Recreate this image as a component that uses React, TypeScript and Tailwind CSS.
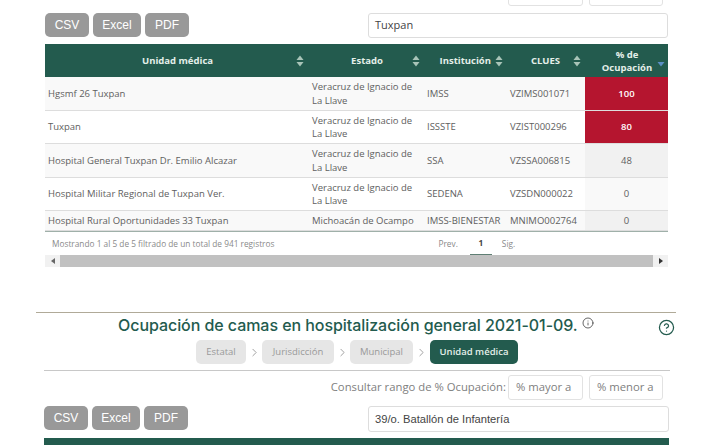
import { ChevronRight, Info, CircleHelp } from "lucide-react";

interface Row {
  unit: string;
  state: string[];
  inst: string;
  clues: string;
  pct: number;
  rowClass: string;
  pctClass: string;
}

const rows: Row[] = [
  { unit: "Hgsmf 26 Tuxpan", state: ["Veracruz de Ignacio de", "La Llave"], inst: "IMSS", clues: "VZIMS001071", pct: 100, rowClass: "h-[33px] bg-[#f9f9f9]", pctClass: "bg-[#b5152f] text-white font-semibold" },
  { unit: "Tuxpan", state: ["Veracruz de Ignacio de", "La Llave"], inst: "ISSSTE", clues: "VZIST000296", pct: 80, rowClass: "h-[33.5px] bg-white", pctClass: "bg-[#b5152f] text-white font-semibold" },
  { unit: "Hospital General Tuxpan Dr. Emilio Alcazar", state: ["Veracruz de Ignacio de", "La Llave"], inst: "SSA", clues: "VZSSA006815", pct: 48, rowClass: "h-[33.5px] bg-[#f9f9f9]", pctClass: "bg-[#f1f1f1]" },
  { unit: "Hospital Militar Regional de Tuxpan Ver.", state: ["Veracruz de Ignacio de", "La Llave"], inst: "SEDENA", clues: "VZSDN000022", pct: 0, rowClass: "h-[33.5px] bg-white", pctClass: "bg-[#f9f9f9]" },
  { unit: "Hospital Rural Oportunidades 33 Tuxpan", state: ["Michoacán de Ocampo"], inst: "IMSS-BIENESTAR", clues: "MNIMO002764", pct: 0, rowClass: "h-[20px] bg-[#f9f9f9]", pctClass: "bg-[#f1f1f1]" },
];

const SortIcon = ({ active }: { active?: boolean }) => (
  <svg width="8" height="12" viewBox="0 0 8 12" className="shrink-0">
    {!active && <path d="M4 0.5 L7.5 5 H0.5 Z" fill="#a9c4b8" />}
    <path d="M0.5 7 H7.5 L4 11.5 Z" fill={active ? "#5b8fc4" : "#a9c4b8"} />
  </svg>
);

const ExportButtons = () => (
  <div className="flex gap-[4px] font-['Liberation_Sans',sans-serif] text-[12px] text-white">
    <div className="flex h-[24px] w-[44px] items-center justify-center rounded-[5px] bg-[#999999]">CSV</div>
    <div className="flex h-[24px] w-[48px] items-center justify-center rounded-[5px] bg-[#999999]">Excel</div>
    <div className="flex h-[24px] w-[44px] items-center justify-center rounded-[5px] bg-[#999999]">PDF</div>
  </div>
);

const RangeFilter = ({ label }: { label?: boolean }) => (
  <div className="flex h-[25px] items-center justify-end gap-[6px] text-[11.3px] text-[#808080]">
    {label && <span className="mr-[-4px]">Consultar rango de % Ocupación:</span>}
    <div className="flex h-[25px] w-[75px] items-center rounded-[3px] border border-[#e2e2e2] bg-white pl-[7px]">{label ? "% mayor a" : ""}</div>
    <div className="flex h-[25px] w-[74px] items-center rounded-[3px] border border-[#e2e2e2] bg-white pl-[7px]">{label ? "% menor a" : ""}</div>
  </div>
);

const Crumb = ({ text, width }: { text: string; width: string }) => (
  <div className={`flex h-[24px] items-center justify-center rounded-[5px] bg-[#e6e6e6] text-[9.5px] text-[#999999] ${width}`}>{text}</div>
);

const Chevron = () => <ChevronRight size={13} strokeWidth={1.5} className="text-[#8c8c8c]" />;

export default function App() {
  return (
    <div className="h-[445px] w-[716px] overflow-hidden bg-white font-['Open_Sans',sans-serif]">
      <div className="mt-[-19px] pl-[45px] pr-[48px]">
        <div className="pr-[5px]">
          <RangeFilter />
        </div>

        <div className="mt-[7px] flex items-start justify-between">
          <ExportButtons />
          <div className="flex h-[25px] w-[300px] items-center rounded-[3px] border border-[#dddddd] bg-white pl-[6px] text-[11px] text-[#444444]">
            Tuxpan
          </div>
        </div>

        <table className="mt-[6px] w-[623px] table-fixed border-collapse text-[9.5px] text-[#606060]">
          <colgroup>
            <col className="w-[264px]" />
            <col className="w-[115px]" />
            <col className="w-[83px]" />
            <col className="w-[78px]" />
            <col className="w-[83px]" />
          </colgroup>
          <thead>
            <tr className="h-[33px] bg-[#235b4e] text-[9.5px] font-bold text-[#e4efe9]">
              <th className="pl-[4px] pr-[5px] pt-[1px]">
                <div className="flex items-center">
                  <span className="flex-1 pl-[10px] text-center">Unidad médica</span>
                  <SortIcon />
                </div>
              </th>
              <th className="pl-[3px] pr-[4px] pt-[1px]">
                <div className="flex items-center">
                  <span className="flex-1 pl-[10px] text-center">Estado</span>
                  <SortIcon />
                </div>
              </th>
              <th className="pl-[3px] pr-[4px] pt-[1px]">
                <div className="flex items-center justify-end gap-[4px]">
                  <span>Institución</span>
                  <SortIcon />
                </div>
              </th>
              <th className="pl-[3px] pr-[4px] pt-[1px]">
                <div className="flex items-center">
                  <span className="flex-1 pl-[8px] text-center">CLUES</span>
                  <SortIcon />
                </div>
              </th>
              <th className="pr-[3px] pt-[1px]">
                <div className="flex items-center">
                  <span className="flex-1 pl-[12px] text-center leading-[13px]">% de Ocupación</span>
                  <SortIcon active />
                </div>
              </th>
            </tr>
          </thead>
          <tbody>
            {rows.map((row) => (
              <tr key={row.clues} className={`${row.rowClass} border-b border-[#dddddd]`}>
                <td className="pl-[3px] pt-[1px]">{row.unit}</td>
                <td className="pl-[3px] pt-[1px] leading-[13.5px]">
                  {row.state.map((line) => (
                    <div key={line}>{line}</div>
                  ))}
                </td>
                <td className="pl-[3px] pt-[1px]">{row.inst}</td>
                <td className="pl-[3px] pt-[1px]">{row.clues}</td>
                <td className={`pt-[1px] text-center ${row.pctClass}`}>{row.pct}</td>
              </tr>
            ))}
          </tbody>
        </table>
        <div className="h-px w-[623px] bg-[#9fb0a9]" />

        <div className="flex h-[23px] w-[623px] items-center pl-[7px] pt-[1px] text-[8.3px] text-[#8a8a8a]">
          <span>Mostrando 1 al 5 de 5 filtrado de un total de 941 registros</span>
          <div className="ml-[164px] flex h-[22px] items-center">
            <span>Prev.</span>
            <span className="ml-[12px] flex h-[22px] w-[22px] items-center justify-center border-b border-[#5f7f74] font-bold text-[#444444]">1</span>
            <span className="ml-[10px]">Sig.</span>
          </div>
        </div>

        <div className="flex h-[12px] w-[623px] items-center bg-[#f1f1f1]">
          <div className="flex w-[15px] justify-center">
            <svg width="4" height="6" viewBox="0 0 4 6"><path d="M4 0 V6 L0 3 Z" fill="#666666" /></svg>
          </div>
          <div className="h-[12px] flex-1 bg-[#c1c1c1]" />
          <div className="flex w-[15px] justify-center">
            <svg width="4" height="6" viewBox="0 0 4 6"><path d="M0 0 V6 L4 3 Z" fill="#333333" /></svg>
          </div>
        </div>
      </div>

      <div className="ml-[36px] mt-[45px] h-px w-[640px] bg-[#b0aa98]" />

      <div className="relative pl-[44px]">
        <div className="flex h-[27px] items-center pb-[3px] pl-[74px] font-['Inter',sans-serif] text-[16px] font-medium tracking-[-0.06px] text-[#235b4e]">
          Ocupación de camas en hospitalización general 2021-01-09.
          <Info size={12} strokeWidth={1.5} className="mb-[4px] ml-[4px] text-[#333333]" />
        </div>
        <CircleHelp size={17} strokeWidth={1.75} className="absolute left-[658px] top-[6px] text-[#235b4e]" />

        <div className="flex items-center pl-[152px]">
          <Crumb text="Estatal" width="w-[50px]" />
          <div className="flex w-[16px] justify-center"><Chevron /></div>
          <Crumb text="Jurisdicción" width="w-[72px]" />
          <div className="flex w-[16px] justify-center"><Chevron /></div>
          <Crumb text="Municipal" width="w-[63px]" />
          <div className="flex w-[17px] justify-center"><Chevron /></div>
          <div className="flex h-[24px] w-[88px] items-center justify-center rounded-[5px] bg-[#235b4e] text-[9.5px] font-semibold text-[#e4efe9]">
            Unidad médica
          </div>
        </div>

        <div className="mt-[6px] h-px w-[626px] bg-[#c8c8c8]" />

        <div className="mt-[4px] w-[619px]">
          <RangeFilter label />
        </div>

        <div className="mt-[6px] flex w-[625px] items-start justify-between">
          <ExportButtons />
          <div className="flex h-[26px] w-[301px] items-center rounded-[3px] border border-[#dddddd] bg-white pl-[6px] font-['Liberation_Sans',sans-serif] text-[11.2px] text-[#444444]">
            39/o. Batallón de Infantería
          </div>
        </div>

        <div className="mt-[6px] h-[33px] w-[625px] bg-[#235b4e]" />
      </div>
    </div>
  );
}
